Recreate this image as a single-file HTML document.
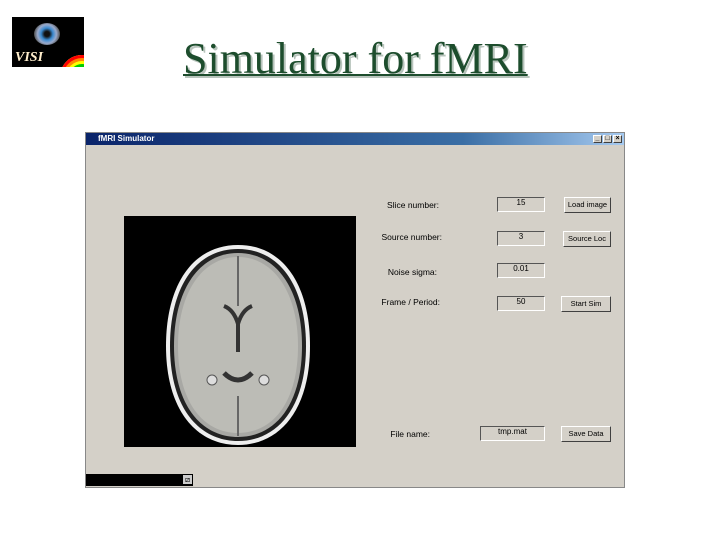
<!DOCTYPE html>
<html><head><style>
*{margin:0;padding:0;box-sizing:border-box}
body{width:720px;height:540px;background:#fff;position:relative;overflow:hidden;font-family:"Liberation Sans",sans-serif}
.title{position:absolute;left:183px;top:33px;font-family:"Liberation Serif",serif;font-size:44px;color:#1d4d2d;text-decoration:underline;text-decoration-thickness:2px;text-decoration-color:#1d4d2d;text-shadow:2px 2px 0 #b8c4bc;white-space:nowrap}
.logo{position:absolute;left:12px;top:17px;width:72px;height:50px;background:#000;overflow:hidden}
.win{position:absolute;left:85px;top:132px;width:540px;height:356px;background:#d4d0c8;border:1px solid #888}
.tb{position:absolute;left:0;top:0;width:100%;height:12px;background:linear-gradient(90deg,#0a246a,#3a6ea5 70%,#a6caf0);color:#fff;font-size:8px;font-weight:bold;line-height:12px;padding-left:12px}
.btns{position:absolute;right:2px;top:2px;display:flex;gap:1px}
.btns span{width:9px;height:8px;background:#d4d0c8;border:1px solid #fff;border-right-color:#404040;border-bottom-color:#404040;font-size:7px;line-height:6px;text-align:center;color:#000}
.lbl{position:absolute;font-size:8.5px;color:#000;text-align:right;width:100px}
.edit{position:absolute;width:48px;height:15px;background:#d4d0c8;border:1px solid;border-color:#555 #fff #fff #555;font-size:8px;text-align:center;line-height:10px}
.btn{position:absolute;height:16px;background:#d4d0c8;border:1px solid;border-color:#fff #404040 #404040 #fff;font-size:7.5px;text-align:center;line-height:14px}
</style></head><body>
<div class="logo">
<div style="position:absolute;left:22px;top:6px;width:26px;height:22px;border-radius:50%;background:radial-gradient(circle,#111 15%,#3a8ad0 35%,#9ac 55%,#555 75%,#000 100%)"></div>
<div style="position:absolute;left:30px;top:20px;width:80px;height:80px;border-radius:50%;border:18px solid transparent;box-shadow:inset 0 0 0 3px #f00,inset 0 0 0 6px #f80,inset 0 0 0 9px #ff0,inset 0 0 0 12px #0c0,inset 0 0 0 15px #08f,inset 0 0 0 18px #80f"></div>
<div style="position:absolute;left:3px;top:33px;font-family:'Liberation Serif',serif;font-style:italic;font-weight:bold;font-size:14px;color:#fec">VISI</div>
</div>
<div class="title">Simulator for fMRI</div>
<div class="win">
<div class="tb">fMRI Simulator<div class="btns"><span>_</span><span>□</span><span>×</span></div></div>
<div style="position:absolute;left:38px;top:83px;width:232px;height:231px;background:#000">
<svg width="232" height="231" viewBox="0 0 232 231">
<path d="M114 29 C160 29 186 70 186 130 C186 195 155 229 114 229 C73 229 42 195 42 130 C42 70 68 29 114 29 Z" fill="#eee"/>
<path d="M114 33 C157 33 182 72 182 130 C182 192 153 225 114 225 C75 225 46 192 46 130 C46 72 71 33 114 33 Z" fill="#222"/>
<path d="M114 37 C153 37 178 74 178 130 C178 189 151 221 114 221 C77 221 50 189 50 130 C50 74 75 37 114 37 Z" fill="#a8a8a4"/>
<path d="M114 41 C150 41 174 77 174 130 C174 186 149 217 114 217 C79 217 54 186 54 130 C54 77 78 41 114 41 Z" fill="#bcbcb6"/>
<path d="M100 90 q10 4 14 18 q4 -14 14 -18 M114 106 v30" stroke="#333" stroke-width="4" fill="none"/>
<path d="M100 157 q14 14 28 0" stroke="#333" stroke-width="5" fill="none"/>
<circle cx="88" cy="164" r="5" fill="#ddd" stroke="#555"/>
<circle cx="140" cy="164" r="5" fill="#ddd" stroke="#555"/>
<path d="M114 40 v50 M114 180 v40" stroke="#666" stroke-width="2"/>
</svg></div>
<div class="lbl" style="left:253px;top:67px">Slice number:</div>
<div class="lbl" style="left:256px;top:99px">Source number:</div>
<div class="lbl" style="left:251px;top:134px">Noise sigma:</div>
<div class="lbl" style="left:254px;top:164px">Frame / Period:</div>
<div class="lbl" style="left:244px;top:296px">File name:</div>
<div class="edit" style="left:411px;top:64px">15</div>
<div class="edit" style="left:411px;top:98px">3</div>
<div class="edit" style="left:411px;top:130px">0.01</div>
<div class="edit" style="left:411px;top:163px">50</div>
<div class="edit" style="left:394px;top:293px;width:65px">tmp.mat</div>
<div class="btn" style="left:478px;top:64px;width:47px">Load image</div>
<div class="btn" style="left:477px;top:98px;width:48px">Source Loc</div>
<div class="btn" style="left:475px;top:163px;width:50px">Start Sim</div>
<div class="btn" style="left:475px;top:293px;width:50px">Save Data</div>
<div style="position:absolute;left:0;top:341px;width:107px;height:12px;background:#000"><div style="position:absolute;right:1px;top:1px;width:9px;height:9px;background:#ccc;font-size:8px;line-height:9px;text-align:center">⧄</div></div>
</div>
</body></html>
